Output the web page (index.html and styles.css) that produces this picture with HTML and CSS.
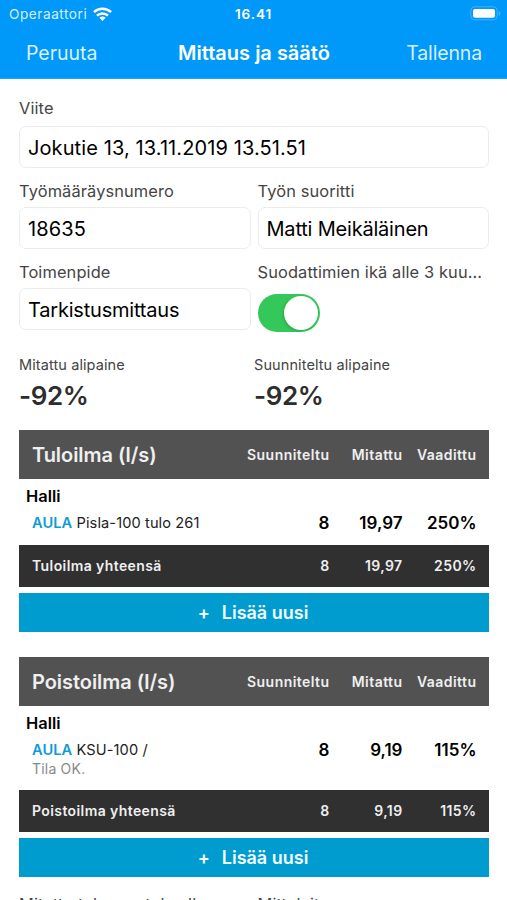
FILE: index.html
```html
<!DOCTYPE HTML>
<html lang="fi">
<head>
<meta charset="UTF-8">
<title>Mittaus ja säätö</title>
<link rel="stylesheet" href="styles.css">
</head>
<body>
<header class="top">
    <div class="status">
        <div class="carrier"><span>Operaattori</span>
            <svg width="19" height="14" viewBox="0 0 19 14" fill="none" stroke="#fff" stroke-width="2.5"><path d="M1 5.2A12.3 12.3 0 0 1 18 5.2M4 8.6A8 8 0 0 1 15 8.6"/><path d="M9.5 14L6.4 10.8A4.6 4.6 0 0 1 12.6 10.8Z" fill="#fff" stroke="none"/></svg>
        </div>
        <b class="clock">16.41</b>
        <svg class="battery" width="31" height="15" viewBox="0 0 31 15"><rect x=".8" y=".8" width="26.4" height="13" rx="3.8" fill="none" stroke="#40b2fb"/><rect x="3" y="3" width="22" height="8.8" rx="2" fill="#fff"/><path d="M28.6 5v5q1.8-.8 1.8-2.5T28.6 5z" fill="#40b2fb"/></svg>
    </div>
    <nav class="nav">
        <a class="cancel">Peruuta</a>
        <h1>Mittaus ja säätö</h1>
        <a class="save">Tallenna</a>
    </nav>
</header>
<main>
    <div class="form">
        <div class="field wide"><label>Viite</label><div class="input num">Jokutie 13, 13.11.2019 13.51.51</div></div>
        <div class="field"><label>Työmääräysnumero</label><div class="input num">18635</div></div>
        <div class="field"><label>Työn suoritti</label><div class="input">Matti Meikäläinen</div></div>
        <div class="field"><label>Toimenpide</label><div class="input">Tarkistusmittaus</div></div>
        <div class="field"><label>Suodattimien ikä alle 3 kuu...</label><div class="switch"><i></i></div></div>
    </div>
    <div class="pressure">
        <div><p>Mitattu alipaine</p><strong>-92%</strong></div>
        <div><p>Suunniteltu alipaine</p><strong>-92%</strong></div>
    </div>
    <section>
        <div class="row head"><h2>Tuloilma (l/s)</h2><span>Suunniteltu</span><span>Mitattu</span><span>Vaadittu</span></div>
        <h3>Halli</h3>
        <div class="row item"><div class="name"><b>AULA</b> Pisla-100 tulo 261</div><span>8</span><span>19,97</span><span>250%</span></div>
        <div class="row total"><div class="name">Tuloilma yhteensä</div><span>8</span><span>19,97</span><span>250%</span></div>
        <a class="add"><i>+</i>Lisää uusi</a>
    </section>
    <section>
        <div class="row head"><h2>Poistoilma (l/s)</h2><span>Suunniteltu</span><span>Mitattu</span><span>Vaadittu</span></div>
        <h3>Halli</h3>
        <div class="row item tall"><div class="name"><b>AULA</b> KSU-100 /<small>Tila OK.</small></div><span>8</span><span>9,19</span><span>115%</span></div>
        <div class="row total"><div class="name">Poistoilma yhteensä</div><span>8</span><span>9,19</span><span>115%</span></div>
        <a class="add"><i>+</i>Lisää uusi</a>
    </section>
    <div class="form more">
        <div class="field"><label>Mitattu teho asetuksella</label></div>
        <div class="field"><label>Mittalaite</label></div>
    </div>
</main>
</body>
</html>
```
FILE: styles.css
```css
*{margin: 0;padding: 0;box-sizing: border-box;}
body{width: 507px;height: 900px;overflow: hidden;background: #fff;color: #000;font-family: Inter,"Liberation Sans",sans-serif;}
.top{height: 79px;background: #0099fa;color: #fff;border-bottom: 1px solid #1da5fb;}
.status{height: 27px;display: grid;grid-template-columns: 1fr auto 1fr;align-items: center;padding: 0 6px 0 9px;font-size: 13.6px;}
.carrier{display: flex;align-items: center;gap: 5px;color: #d4eeff;letter-spacing: .55px;}
.carrier span{width: 79px;}
.clock{font-weight: 600;letter-spacing: .9px;margin-right: 3px;}
.battery{justify-self: end;}
.nav{height: 51px;display: grid;grid-template-columns: 1fr auto 1fr;align-items: center;padding: 0 25px 0 26px;font-size: 19.5px;color: #d9f0ff;}
.nav h1{font-size: 20px;font-weight: 600;color: #fff;}
.save{text-align: right;letter-spacing: -.15px;}
main{padding: 18px 18px 0 19px;}
.form{display: grid;grid-template-columns: 1fr 1fr;column-gap: 7px;}
.field{height: 81px;}
.field.wide{grid-column: 1 / 3;height: 83px;}
.field label{display: block;height: 27px;line-height: 22px;font-size: 16.4px;letter-spacing: .12px;color: #444;white-space: nowrap;}
.field.wide label{height: 29px;}
.input{height: 42px;border: 1px solid #ececec;border-radius: 7px;padding: 0 8px;font-size: 20px;line-height: 42px;letter-spacing: -.2px;white-space: nowrap;}
.input.num{letter-spacing: .1px;}
.switch{width: 62px;height: 38px;border-radius: 19px;background: #34c759;padding: 2px;margin-top: 6px;display: flex;justify-content: flex-end;}
.switch i{width: 34px;height: 34px;border-radius: 50%;background: #fff;box-shadow: -1px 1px 3px rgba(0,0,0,.15);}
.pressure{display: grid;grid-template-columns: 1fr 1fr;height: 88px;padding-top: 14px;}
.pressure p{font-size: 14.5px;line-height: 18px;letter-spacing: .1px;color: #444;}
.pressure strong{display: block;font-size: 26px;line-height: 43px;font-weight: 600;letter-spacing: -.4px;color: #2d2d2d;}
section{margin-bottom: 25px;}
.row{display: grid;grid-template-columns: 1fr 90px 73px 74px;padding: 0 12px 0 13px;align-items: center;}
.row span{text-align: right;font-weight: 600;padding-right: .5px;}
.head{height: 49px;background: #525252;color: #efefef;font-size: 14px;}
.head span{letter-spacing: .45px;}
.head h2{font-size: 20px;font-weight: 600;letter-spacing: -.05px;}
h3{height: 33px;padding-left: 7px;font-size: 16.4px;line-height: 34px;font-weight: 600;}
.item{height: 33px;align-items: start;font-size: 17px;line-height: 22px;}
.item .name{font-size: 14.6px;letter-spacing: .1px;color: #222;}
.item b{font-weight: 600;color: #0b9dd3;}
.item small{display: block;font-size: 14px;line-height: 16px;letter-spacing: .2px;color: #888;}
.item.tall{height: 51px;}
.total{height: 42px;padding-bottom: 1px;background: #303030;color: #efefef;font-size: 14px;font-weight: 600;letter-spacing: .4px;}
.add{display: flex;align-items: center;justify-content: center;gap: 12px;height: 39px;margin-top: 6px;padding-right: 2px;background: #009bcf;color: #f1fcff;font-size: 18px;font-weight: 600;}
.add i{font-style: normal;}
.more{margin-top: -9px;}
```
